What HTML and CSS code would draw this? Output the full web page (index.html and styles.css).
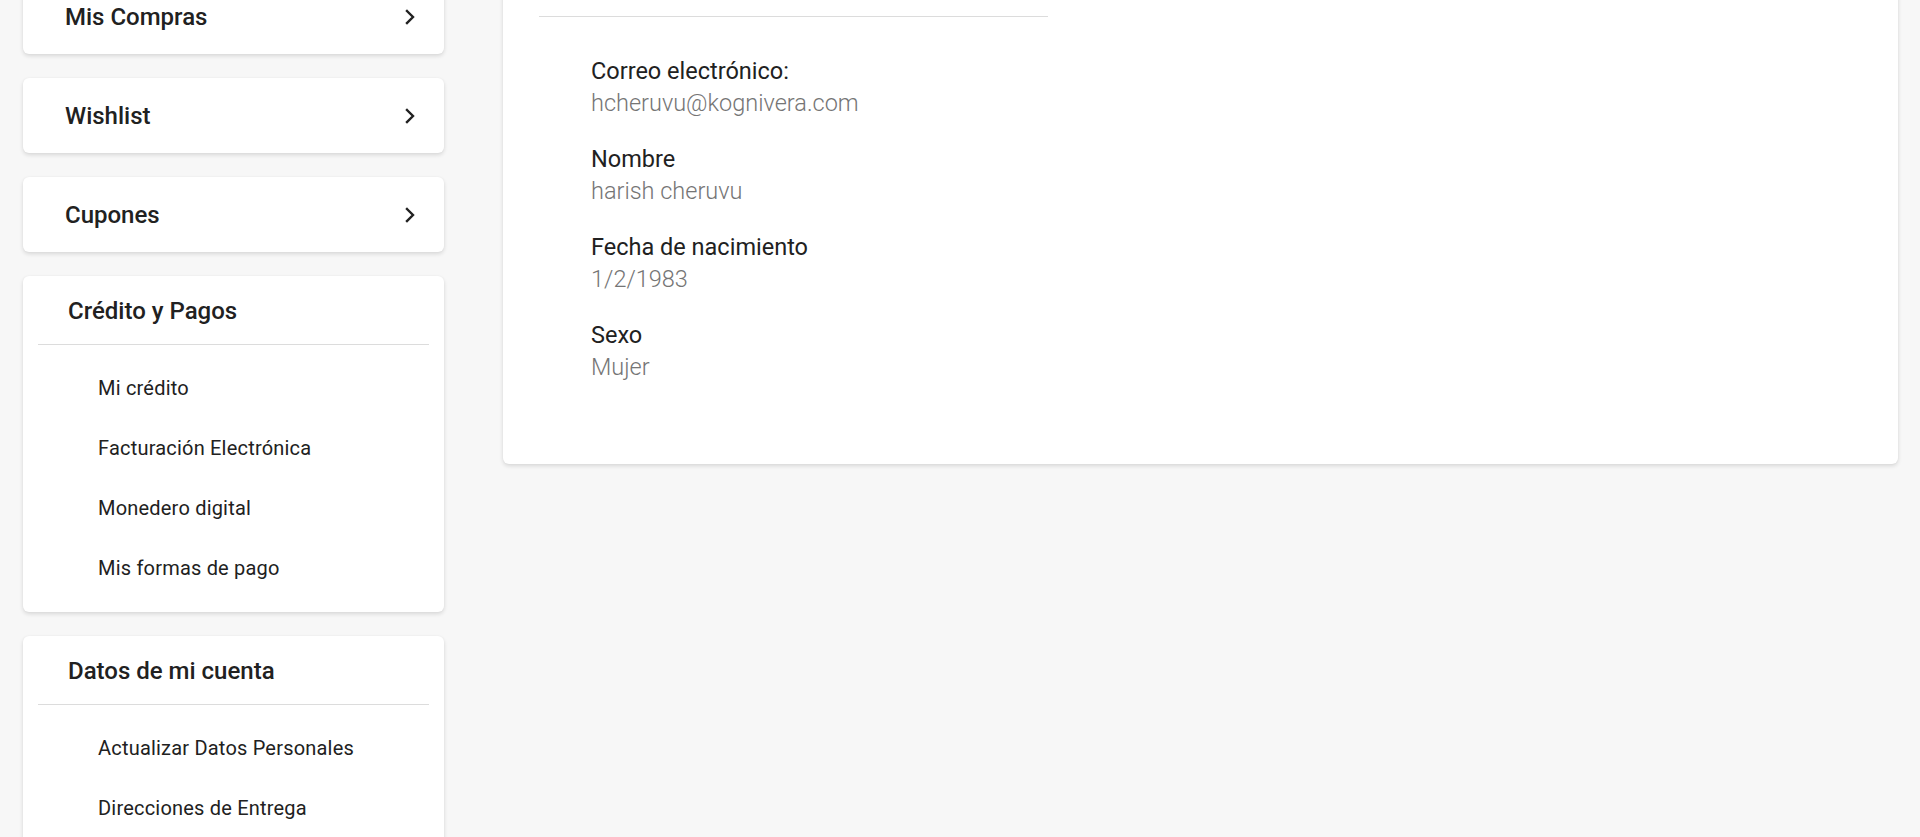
FILE: index.html
```html
<!DOCTYPE html>
<html lang="es">
<head>
<meta charset="utf-8">
<title>Mi cuenta</title>
<link rel="stylesheet" href="styles.css">
</head>
<body>
<div class="page">
  <aside class="sidebar">
    <a class="nav-card" href="#"><span>Mis Compras</span><svg class="chev" viewBox="0 0 10 16" width="10" height="16"><polyline points="2,2 8,8 2,14"/></svg></a>
    <a class="nav-card" href="#"><span>Wishlist</span><svg class="chev" viewBox="0 0 10 16" width="10" height="16"><polyline points="2,2 8,8 2,14"/></svg></a>
    <a class="nav-card" href="#"><span>Cupones</span><svg class="chev" viewBox="0 0 10 16" width="10" height="16"><polyline points="2,2 8,8 2,14"/></svg></a>
    <section class="group-card">
      <h3 class="group-title">Crédito y Pagos</h3>
      <ul class="group-list">
        <li><a href="#">Mi crédito</a></li>
        <li><a href="#">Facturación Electrónica</a></li>
        <li><a href="#">Monedero digital</a></li>
        <li><a href="#">Mis formas de pago</a></li>
      </ul>
    </section>
    <section class="group-card">
      <h3 class="group-title">Datos de mi cuenta</h3>
      <ul class="group-list">
        <li><a href="#">Actualizar Datos Personales</a></li>
        <li><a href="#">Direcciones de Entrega</a></li>
      </ul>
    </section>
  </aside>
  <main class="content">
    <section class="info-card">
      <div class="info-divider"></div>
      <dl class="info-list">
        <div class="info-item"><dt>Correo electrónico:</dt><dd>hcheruvu@kognivera.com</dd></div>
        <div class="info-item"><dt>Nombre</dt><dd>harish cheruvu</dd></div>
        <div class="info-item"><dt>Fecha de nacimiento</dt><dd>1/2/1983</dd></div>
        <div class="info-item"><dt>Sexo</dt><dd>Mujer</dd></div>
      </dl>
    </section>
  </main>
</div>
</body>
</html>
```
FILE: styles.css
```css
* { box-sizing: border-box; }
html, body { margin: 0; padding: 0; }
body {
  background: #f7f7f7;
  font-family: Roboto, "Liberation Sans", Arial, sans-serif;
  color: #212121;
  overflow: hidden;
}
.page {
  display: flex;
  align-items: flex-start;
  gap: 59px;
  padding: 0 22px 0 23px;
  margin-top: -21px;
}
.sidebar {
  width: 421px;
  flex: 0 0 421px;
  display: flex;
  flex-direction: column;
  gap: 24px;
}
.nav-card, .group-card, .info-card {
  background: #fff;
  border-radius: 6px;
  box-shadow: 0 2px 4px rgba(0,0,0,0.13), 0 0 2px rgba(0,0,0,0.04);
}
.nav-card {
  height: 75px;
  display: flex;
  align-items: center;
  justify-content: space-between;
  padding: 1px 29px 0 42px;
  text-decoration: none;
  color: #212121;
  font-size: 24px;
  font-weight: 500;
}
.chev {
  fill: none;
  stroke: #212121;
  stroke-width: 2.4;
  stroke-linecap: square;
}
.group-card {
  padding: 0 15px 14px;
}
.group-title {
  margin: 0;
  padding: 20px 0 18px 30px;
  line-height: 30px;
  font-size: 24px;
  font-weight: 500;
  border-bottom: 1px solid #dcdcdc;
}
.group-list {
  list-style: none;
  margin: 0;
  padding: 13px 0 0 0;
}
.group-list li {
  height: 60px;
  display: flex;
  align-items: center;
  padding-left: 60px;
}
.group-list a {
  text-decoration: none;
  color: #212121;
  font-size: 20px;
  letter-spacing: 0.2px;
}
.content {
  flex: 1;
}
.info-card {
  padding: 37px 36px 81px;
}
.info-divider {
  width: 509px;
  height: 1px;
  background: #dcdcdc;
}
.info-list {
  margin: 38px 0 0 52px;
  display: flex;
  flex-direction: column;
  gap: 24px;
}
.info-item dt {
  font-size: 23.5px;
  line-height: 32px;
  font-weight: 400;
  color: #212121;
}
.info-item dd {
  margin: 0;
  font-size: 23.5px;
  line-height: 32px;
  font-weight: 300;
  color: #757575;
}
```
